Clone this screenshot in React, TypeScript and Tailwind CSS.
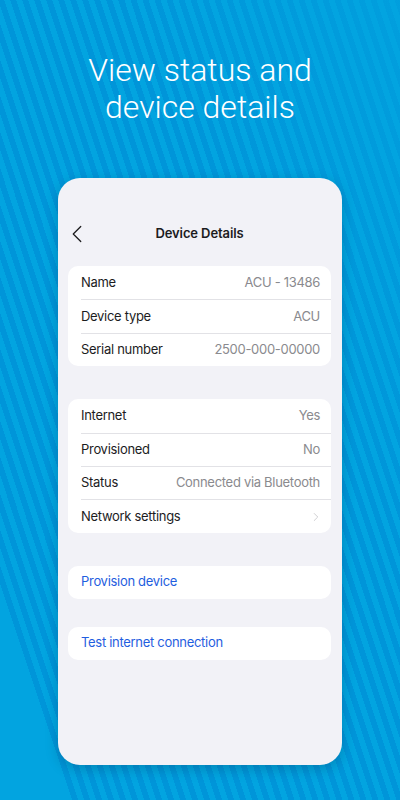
import { ChevronLeft, ChevronRight } from "lucide-react";

const infoRows = [
  { label: "Name", value: "ACU - 13486" },
  { label: "Device type", value: "ACU" },
  { label: "Serial number", value: "2500-000-00000" },
];

const statusRows = [
  { label: "Internet", value: "Yes" },
  { label: "Provisioned", value: "No" },
  { label: "Status", value: "Connected via Bluetooth" },
];

const Row = ({ label, value, first }: { label: string; value?: string; first?: boolean }) => (
  <div className="pl-[13px]">
    <div
      className={
        "box-border h-[33.4px] flex items-center justify-between pr-[11px] text-[13px] tracking-[-0.3px] " +
        (first ? "" : "border-t border-[#e2e2e6]")
      }
    >
      <span className="text-[#1c1c1e]">{label}</span>
      {value ? (
        <span className="text-[#8a8a8e]">{value}</span>
      ) : (
        <ChevronRight size={14} strokeWidth={1.4} className="text-[#c4c4c8] -mr-[3px]" />
      )}
    </div>
  </div>
);

const App = () => {
  return (
    <div className="w-[400px] h-[800px] overflow-hidden flex flex-col items-center bg-[#02a4e0] bg-[image:linear-gradient(71.6deg,#02a4e0_68px,transparent_68px),linear-gradient(to_bottom_left,rgba(2,164,224,0.65),transparent_35%),repeating-linear-gradient(71.6deg,#0095d9_0px,#0095d9_5.7px,#02a4e0_5.7px,#02a4e0_11.4px)]">
      <h1
        className="mt-[52px] text-white text-[32px] leading-[37px] font-light text-center"
        style={{ fontFamily: "Roboto, 'Noto Sans', sans-serif" }}
      >
        View status and
        <br />
        device details
      </h1>

      <div
        className="mt-[52px] w-[284px] h-[587px] rounded-[22px] bg-[#f2f2f7] shadow-[0_4px_14px_rgba(0,0,0,0.18)] pl-[10px] pr-[11px]"
        style={{ fontFamily: "Inter, 'Noto Sans', sans-serif" }}
      >
        {/* header */}
        <div className="mt-[42px] h-[28px] relative flex items-center justify-center">
          <ChevronLeft size={30} strokeWidth={1} className="absolute left-[-6px] text-[#1c1c1e]" />
          <span className="text-[13px] font-semibold tracking-[-0.1px] text-[#1c1c1e]">Device Details</span>
        </div>

        <div className="mt-[18px] bg-white rounded-[10px] overflow-hidden">
          {infoRows.map((r, i) => (
            <Row key={r.label} label={r.label} value={r.value} first={i === 0} />
          ))}
        </div>

        <div className="mt-[33px] bg-white rounded-[10px] overflow-hidden">
          {statusRows.map((r, i) => (
            <Row key={r.label} label={r.label} value={r.value} first={i === 0} />
          ))}
          <Row label="Network settings" />
        </div>

        <div className="mt-[33px] h-[33px] bg-white rounded-[10px] flex items-center pl-[13px] text-[13px] tracking-[-0.3px] text-[#1f5ee0]">
          Provision device
        </div>

        <div className="mt-[28px] h-[33px] bg-white rounded-[10px] flex items-center pl-[13px] text-[13px] tracking-[-0.3px] text-[#1f5ee0]">
          Test internet connection
        </div>
      </div>
    </div>
  );
};

export default App;
